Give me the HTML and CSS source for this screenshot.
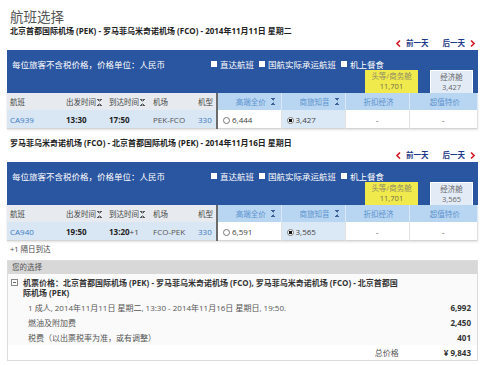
FILE: index.html
```html
<!DOCTYPE html>
<html lang="zh-CN">
  <head>
    <meta charset="utf-8" />
    <title>航班选择</title>
    <link rel="stylesheet" href="styles.css">
  </head>
  <body>
    <div class="page">
      <h1 class="title">航班选择</h1>

      <section class="leg">
        <div class="route">北京首都国际机场 (PEK) - 罗马菲乌米奇诺机场 (FCO) - 2014年11月11日 星期二</div>
        <div class="day-nav">
          <a class="prev" href="#"><svg width="5" height="7" viewBox="0 0 5 7"><path d="M4 0.5 L1 3.5 L4 6.5" /></svg>前一天</a>
          <a class="next" href="#">后一天<svg width="5" height="7" viewBox="0 0 5 7"><path d="M1 0.5 L4 3.5 L1 6.5" /></svg></a>
        </div>
        <div class="band">
          <div class="band-top">
            <span class="note">每位旅客不含税价格，价格单位：人民币</span>
            <label class="check"><span class="box"></span>直达航班</label>
            <label class="check"><span class="box"></span>国航实际承运航班</label>
            <label class="check"><span class="box"></span>机上餐食</label>
          </div>
          <div class="tabs">
            <div class="tab tab-first">头等/商务舱<br><span class="tab-price">11,701</span></div>
            <div class="tab tab-eco">经济舱<br><span class="tab-price">3,427</span></div>
          </div>
        </div>
        <table class="flights">
          <colgroup>
            <col class="c-no"><col class="c-dep"><col class="c-arr"><col class="c-apt"><col class="c-type">
            <col class="c-fare"><col class="c-fare"><col class="c-fare"><col>
          </colgroup>
          <tr class="head">
            <th>航班</th>
            <th>出发时间<span class="sort"></span></th>
            <th>到达时间<span class="sort"></span></th>
            <th>机场</th>
            <th class="type">机型</th>
            <th class="fare first">高端全价<span class="sort"></span></th>
            <th class="fare">商旅知音<span class="sort"></span></th>
            <th class="fare">折扣经济</th>
            <th class="fare">超值特价</th>
          </tr>
          <tr class="row">
            <td class="no">CA939</td>
            <td class="time">13:30</td>
            <td class="time">17:50</td>
            <td class="apt">PEK-FCO</td>
            <td class="type">330</td>
            <td class="price first"><span class="radio"></span>6,444</td>
            <td class="price selected"><span class="radio on"></span>3,427</td>
            <td class="price none">-</td>
            <td class="price none">-</td>
          </tr>
        </table>
      </section>

      <section class="leg">
        <div class="route">罗马菲乌米奇诺机场 (FCO) - 北京首都国际机场 (PEK) - 2014年11月16日 星期日</div>
        <div class="day-nav">
          <a class="prev" href="#"><svg width="5" height="7" viewBox="0 0 5 7"><path d="M4 0.5 L1 3.5 L4 6.5" /></svg>前一天</a>
          <a class="next" href="#">后一天<svg width="5" height="7" viewBox="0 0 5 7"><path d="M1 0.5 L4 3.5 L1 6.5" /></svg></a>
        </div>
        <div class="band">
          <div class="band-top">
            <span class="note">每位旅客不含税价格，价格单位：人民币</span>
            <label class="check"><span class="box"></span>直达航班</label>
            <label class="check"><span class="box"></span>国航实际承运航班</label>
            <label class="check"><span class="box"></span>机上餐食</label>
          </div>
          <div class="tabs">
            <div class="tab tab-first">头等/商务舱<br><span class="tab-price">11,701</span></div>
            <div class="tab tab-eco">经济舱<br><span class="tab-price">3,565</span></div>
          </div>
        </div>
        <table class="flights">
          <colgroup>
            <col class="c-no"><col class="c-dep"><col class="c-arr"><col class="c-apt"><col class="c-type">
            <col class="c-fare"><col class="c-fare"><col class="c-fare"><col>
          </colgroup>
          <tr class="head">
            <th>航班</th>
            <th>出发时间<span class="sort"></span></th>
            <th>到达时间<span class="sort"></span></th>
            <th>机场</th>
            <th class="type">机型</th>
            <th class="fare first">高端全价<span class="sort"></span></th>
            <th class="fare">商旅知音<span class="sort"></span></th>
            <th class="fare">折扣经济</th>
            <th class="fare">超值特价</th>
          </tr>
          <tr class="row">
            <td class="no">CA940</td>
            <td class="time">19:50</td>
            <td class="time">13:20<span class="plus">+1</span></td>
            <td class="apt">FCO-PEK</td>
            <td class="type">330</td>
            <td class="price first"><span class="radio"></span>6,591</td>
            <td class="price selected"><span class="radio on"></span>3,565</td>
            <td class="price none">-</td>
            <td class="price none">-</td>
          </tr>
        </table>
      </section>

      <div class="next-day">+1 隔日到达</div>

      <section class="summary">
        <div class="summary-head">您的选择</div>
        <div class="fare-title">
          <span class="toggle"></span>
          <div class="desc">机票价格：北京首都国际机场 (PEK) - 罗马菲乌米奇诺机场 (FCO), 罗马菲乌米奇诺机场 (FCO) - 北京首都国际机场 (PEK)</div>
        </div>
        <div class="line"><span>1 成人, 2014年11月11日 星期二, 13:30 - 2014年11月16日 星期日, 19:50.</span><b>6,992</b></div>
        <div class="line"><span>燃油及附加费</span><b>2,450</b></div>
        <div class="line"><span>税费（以出票税率为准，或有调整）</span><b>401</b></div>
        <div class="line total"><span class="total-label">总价格</span><b>¥ 9,843</b></div>
      </section>
    </div>
  </body>
</html>
```

FILE: styles.css
```css
body {
  margin: 0;
  background: #fff;
  font-family: "Open Sans", "Noto Sans CJK SC", sans-serif;
  font-size: 7.5px;
  color: #333;
}

.page {
  width: 471px;
  padding-left: 7px;
}

.title {
  margin: 0;
  padding: 7px 0 0 3px;
  font-family: "Noto Sans CJK SC", sans-serif;
  font-size: 13.5px;
  line-height: 18px;
  font-weight: normal;
  color: #555;
}

.leg {
  margin-bottom: 8px;
}

.route {
  padding-left: 3px;
  line-height: 12px;
  font-size: 8px;
  font-weight: bold;
  color: #222;
}

.day-nav {
  display: flex;
  justify-content: flex-end;
  gap: 14px;
  padding-right: 3px;
  line-height: 13px;
}

.day-nav a {
  display: flex;
  align-items: center;
  gap: 5px;
  color: #1d3a8a;
  font-weight: bold;
  text-decoration: none;
}

.day-nav svg path {
  fill: none;
  stroke: #d4202c;
  stroke-width: 1.6;
}

.band {
  display: flex;
  flex-direction: column;
  height: 43px;
  background: #2a55a0;
}

.band-top {
  display: flex;
  align-items: center;
  height: 12px;
  margin-top: 8px;
  padding-left: 5px;
  color: #fff;
  font-size: 8.5px;
}

.note {
  width: 199px;
}

.check {
  display: flex;
  align-items: center;
  margin-right: 5px;
}

.check .box {
  width: 6px;
  height: 6px;
  margin-right: 3px;
  background: #fff;
}

.tabs {
  display: flex;
  justify-content: flex-end;
  gap: 12px;
  margin-top: auto;
  padding-right: 5px;
}

.tab {
  box-sizing: border-box;
  height: 23px;
  padding-top: 2px;
  text-align: center;
  line-height: 9.5px;
}

.tab-first {
  width: 53px;
  background: #f1ea4c;
  color: #8f8c66;
}

.tab-first .tab-price {
  color: #6f6d50;
}

.tab-eco {
  width: 43px;
  background: #e3ecf6;
  border: 1px solid #fff;
  border-bottom: none;
  color: #666;
}

.flights {
  width: 471px;
  table-layout: fixed;
  border-collapse: collapse;
  border-bottom: 1px solid #d4d4d4;
  box-shadow: 0 1px 2px rgba(0,0,0,0.12);
}

.c-no { width: 56px; }
.c-dep { width: 43px; }
.c-arr { width: 44px; }
.c-apt { width: 45px; }
.c-type { width: 22px; }
.c-fare { width: 64px; }

.flights th,
.flights td {
  padding: 0 0 0 3px;
  white-space: nowrap;
  text-align: left;
}

.head th {
  height: 17px;
  background: #e7ebef;
  font-weight: normal;
  color: #444;
}

.head th.type,
.row td.type {
  text-align: right;
  padding-right: 6px;
}

.head th.fare {
  position: relative;
  text-align: center;
  background: #b8d5f1;
  color: #5b93cf;
  border-right: 1px solid #dbe9f7;
}

.flights .first {
  border-left: 2px solid #6b6b6b;
}

.sort {
  display: inline-block;
  width: 5px;
  height: 7px;
  margin-left: 1px;
  vertical-align: -1px;
  background:
    linear-gradient(to top right, transparent 50%, #555 50%) 0 0 / 2.5px 3px no-repeat,
    linear-gradient(to top left, transparent 50%, #555 50%) 2.5px 0 / 2.5px 3px no-repeat,
    linear-gradient(to bottom right, transparent 50%, #555 50%) 0 4px / 2.5px 3px no-repeat,
    linear-gradient(to bottom left, transparent 50%, #555 50%) 2.5px 4px / 2.5px 3px no-repeat;
}

.head th.fare .sort {
  position: absolute;
  right: 5px;
  top: 5px;
  background:
    linear-gradient(to top right, transparent 50%, #3a5f93 50%) 0 0 / 2.5px 3px no-repeat,
    linear-gradient(to top left, transparent 50%, #3a5f93 50%) 2.5px 0 / 2.5px 3px no-repeat,
    linear-gradient(to bottom right, transparent 50%, #3a5f93 50%) 0 4px / 2.5px 3px no-repeat,
    linear-gradient(to bottom left, transparent 50%, #3a5f93 50%) 2.5px 4px / 2.5px 3px no-repeat;
}

.row td {
  height: 18px;
  background: #d9e6f4;
  font-size: 8px;
}

.row .no,
.row .type {
  color: #3d7bc2;
}

.row .time {
  font-weight: bold;
  color: #222;
}

.plus {
  font-weight: normal;
  color: #444;
}

.row .apt {
  color: #555;
}

.row td.price {
  background: #fff;
  color: #444;
  border-right: 1px solid #e2e2e2;
  padding-left: 5px;
}

.row td.selected {
  background: #dbe9f7;
}

.row td.none {
  text-align: center;
  padding-left: 0;
}

.radio {
  display: inline-block;
  box-sizing: border-box;
  width: 7px;
  height: 7px;
  margin-right: 2px;
  border: 1px solid #777;
  border-radius: 50%;
  background: #fff;
  vertical-align: -1px;
}

.radio.on {
  background: radial-gradient(circle, #111 45%, #fff 55%);
}

.next-day {
  padding-left: 3px;
  line-height: 12px;
  margin-top: -6px;
  color: #444;
}

.summary {
  margin-top: 5px;
  border: 1px solid #dcdcdc;
  background: #fafafa;
}

.summary-head {
  height: 13px;
  line-height: 13px;
  padding-left: 4px;
  background: #d8d8d8;
  color: #555;
}

.fare-title {
  display: flex;
  padding: 4px 0 2px 3px;
}

.toggle {
  position: relative;
  box-sizing: border-box;
  flex: none;
  width: 7px;
  height: 7px;
  margin: 1px 5px 0 0;
  border: 1px solid #888;
}

.toggle::after {
  content: "";
  position: absolute;
  left: 1px;
  right: 1px;
  top: 2px;
  height: 1px;
  background: #666;
}

.desc {
  width: 379px;
  line-height: 10px;
  font-size: 8px;
  font-weight: bold;
  color: #333;
}

.line {
  display: flex;
  justify-content: space-between;
  height: 15px;
  line-height: 15px;
  padding: 0 6px 0 20px;
  font-size: 8px;
  color: #555;
}

.line b {
  color: #333;
}

.line.total {
  background: #fff;
}

.total-label {
  margin-left: auto;
  margin-right: 45px;
}
```
